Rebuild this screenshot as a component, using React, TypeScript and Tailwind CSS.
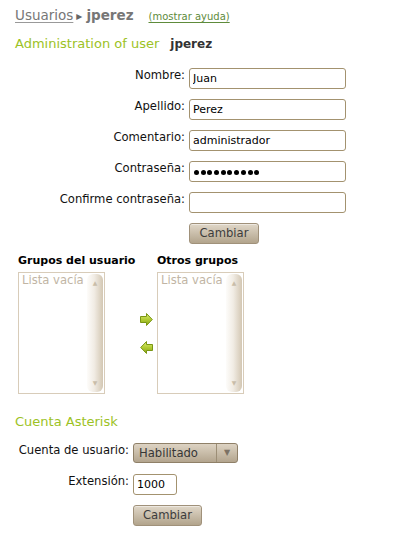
import React from "react";

const font = "font-['DejaVu_Sans',sans-serif]";
const labelCls = "shrink-0 pt-[1px] text-right text-[11.6px] leading-[13px] text-[#111]";
const inputCls =
  "h-[21px] rounded-[3px] border border-[#a3926f] bg-white px-[3px] text-[11px] text-black outline-none";
const buttonCls =
  "h-[21px] rounded-[3px] border border-[#a0917a] bg-[linear-gradient(to_bottom,#e0d7c8,#b2a48c)] text-[11.6px] leading-[19px] text-[#3c3c3c] shadow-[inset_0_1px_0_rgba(255,255,255,0.45)]";

type Field = { label: string; value: string; secret?: number };

const userFields: Field[] = [
  { label: "Nombre:", value: "Juan" },
  { label: "Apellido:", value: "Perez" },
  { label: "Comentario:", value: "administrador" },
  { label: "Contraseña:", value: "", secret: 10 },
  { label: "Confirme contraseña:", value: "" },
];

function MoveArrow({ left }: { left?: boolean }) {
  const id = left ? "gl" : "gr";
  return (
    <svg width="13" height="13" viewBox="0 0 13 13" className={left ? "-scale-x-100" : ""}>
      <defs>
        <linearGradient id={id} x1="0" y1="0" x2="0" y2="1">
          <stop offset="0" stopColor="#dbec78" />
          <stop offset="0.5" stopColor="#b2cc34" />
          <stop offset="1" stopColor="#86a315" />
        </linearGradient>
      </defs>
      <polygon
        points="0.5,3.5 6.5,3.5 6.5,0.5 12.3,6.5 6.5,12.5 6.5,9.5 0.5,9.5"
        fill={`url(#${id})`}
        stroke="#7a9614"
        strokeWidth="1"
      />
    </svg>
  );
}

function ListBox() {
  return (
    <div className="flex h-[122px] w-[87px] border border-[#d8ccb9] bg-white">
      <div className="flex-1 pl-[3px] pt-[1px] text-[11.6px] leading-[13px] text-[#c1b5a4]">Lista vacía</div>
      <div className="my-[1px] mr-[1px] flex w-[16px] flex-col items-center justify-between rounded-[6px] bg-[linear-gradient(to_right,#fdfcfa,#f1ece4_45%,#d3c7b3)] py-[5px] text-[6px] leading-[8px] text-[#c9bda9]">
        <span>▲</span>
        <span>▼</span>
      </div>
    </div>
  );
}

export default function App() {
  return (
    <div className={`${font} h-[535px] w-[394px] overflow-hidden bg-white pl-[15px] pt-[7px]`}>
      <div className="flex h-[16px] items-baseline text-[13.5px] leading-[16px] text-[#777]">
        <span className="underline decoration-[#999] underline-offset-2">Usuarios</span>
        <span className="ml-[3px] text-[12px] text-[#666]">▸</span>
        <span className="ml-[4px] font-bold">jperez</span>
        <span className="ml-[15px] text-[10px] text-[#5e8b3b] underline underline-offset-2">(mostrar ayuda)</span>
      </div>

      <div className="mt-[13px] flex h-[16px] items-baseline text-[13px] leading-[16px]">
        <span className="text-[#9cc225]">Administration of user</span>
        <span className="ml-[11px] text-[12px] font-bold text-[#333]">jperez</span>
      </div>

      <div className="mt-[16px] flex flex-col gap-[10px]">
        {userFields.map((f) => (
          <div key={f.label} className="flex h-[21px] items-start">
            <div className={`${labelCls} w-[170px]`}>{f.label}</div>
            {f.secret ? (
              <div className={`${inputCls} ml-[4px] flex w-[157px] items-center gap-[1.7px] pl-[4px] pt-[1px]`}>
                {Array.from({ length: f.secret }).map((_, i) => (
                  <span key={i} className="h-[5px] w-[5px] rounded-full bg-black" />
                ))}
              </div>
            ) : (
              <input readOnly value={f.value} className={`${inputCls} ml-[4px] w-[157px]`} />
            )}
          </div>
        ))}
        <div className="flex">
          <button className={`${buttonCls} ml-[174px] w-[70px]`}>Cambiar</button>
        </div>
      </div>

      <div className="ml-[3px] mt-[10px] grid grid-cols-[122px_17px_auto] text-[11px] leading-[13px]">
        <div className="font-bold text-black">Grupos del usuario</div>
        <div />
        <div className="font-bold text-black">Otros grupos</div>
        <div className="mt-[5px]">
          <ListBox />
        </div>
        <div className="mt-[5px] flex flex-col justify-center gap-[15px] pt-[1px]">
          <MoveArrow />
          <MoveArrow left />
        </div>
        <div className="mt-[5px]">
          <ListBox />
        </div>
      </div>

      <div className="mt-[20px] h-[16px] text-[13px] leading-[16px] text-[#9cc225]">Cuenta Asterisk</div>

      <div className="mt-[13px] flex flex-col">
        <div className="flex h-[20px] items-start">
          <div className={`${labelCls} w-[114px]`}>Cuenta de usuario:</div>
          <div className="ml-[4px] flex h-[20px] w-[105px] items-stretch rounded-[3px] border border-[#8f8068] bg-[linear-gradient(to_bottom,#ddd3c3,#b3a58e)] text-[11.6px] text-[#363636]">
            <div className="flex flex-1 items-center pl-[5px] pt-[1px]">Habilitado</div>
            <div className="w-px bg-[#9c8e76]" />
            <div className="flex w-[20px] items-center justify-center text-[8px] text-[#7c7264]">▼</div>
          </div>
        </div>
        <div className="mt-[11px] flex h-[21px] items-start">
          <div className={`${labelCls} w-[114px]`}>Extensión:</div>
          <input readOnly value="1000" className={`${inputCls} ml-[4px] w-[44px]`} />
        </div>
        <div className="mt-[10px] flex">
          <button className={`${buttonCls} ml-[118px] w-[69px]`}>Cambiar</button>
        </div>
      </div>
    </div>
  );
}
